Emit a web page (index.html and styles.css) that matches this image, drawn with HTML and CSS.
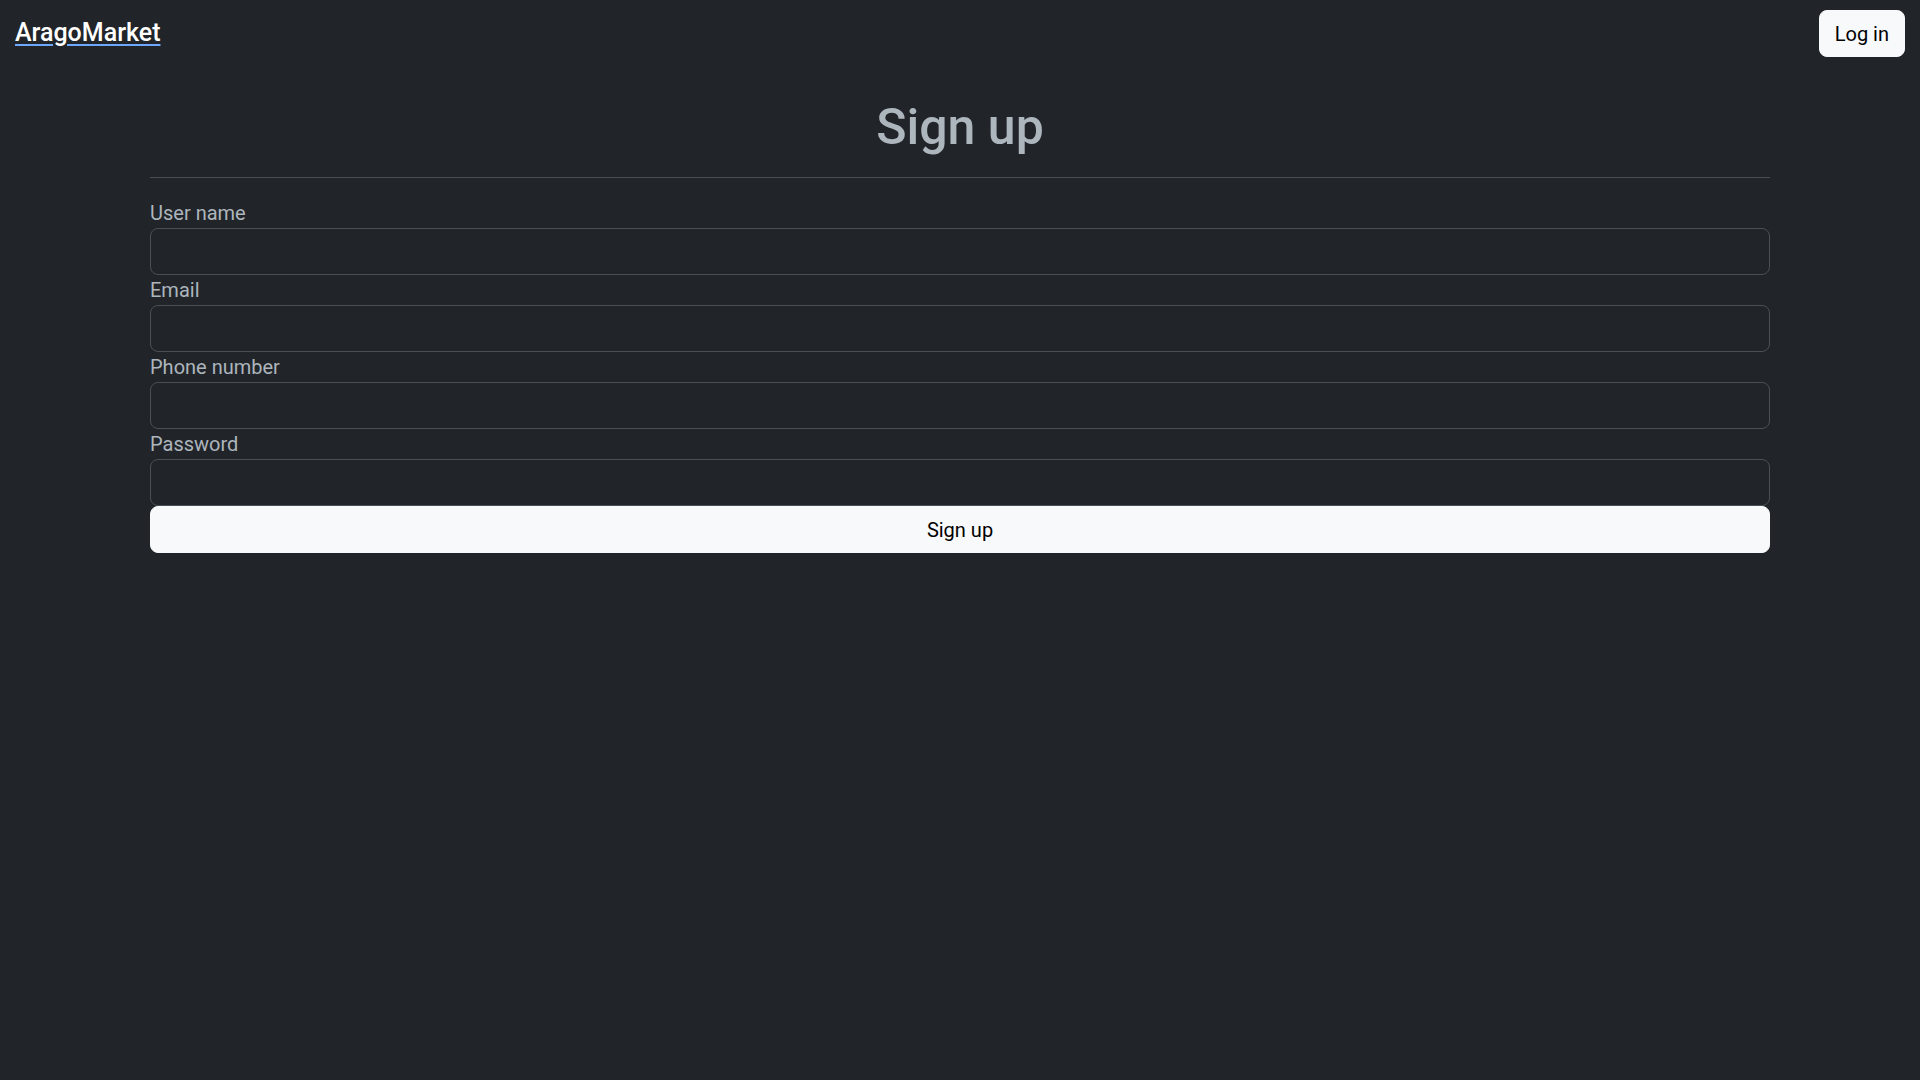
FILE: index.html
```html
<!DOCTYPE html>
<html lang="en">
<head>
<meta charset="utf-8">
<title>Sign up - AragoMarket</title>
<link rel="stylesheet" href="styles.css">
</head>
<body>
<header class="topbar">
  <a class="brand" href="#">AragoMarket</a>
  <button class="btn btn-login" type="button">Log in</button>
</header>
<main class="container">
  <h1 class="title">Sign up</h1>
  <hr class="divider">
  <form class="form">
    <label class="label" for="username">User name</label>
    <input class="input" id="username" type="text">
    <label class="label" for="email">Email</label>
    <input class="input" id="email" type="email">
    <label class="label" for="phone">Phone number</label>
    <input class="input" id="phone" type="tel">
    <label class="label" for="password">Password</label>
    <input class="input" id="password" type="password">
    <button class="btn btn-submit" type="submit">Sign up</button>
  </form>
</main>
</body>
</html>
```
FILE: styles.css
```css
* { box-sizing: border-box; }
html, body { margin: 0; padding: 0; }
body {
  background: #212529;
  color: #adb5bd;
  font-family: Roboto, "Liberation Sans", sans-serif;
  min-height: 100vh;
}
.topbar {
  display: flex;
  justify-content: space-between;
  align-items: flex-start;
  padding: 10px 15px 0 15px;
}
.brand {
  color: #ffffff;
  font-size: 25px;
  font-weight: 500;
  line-height: 44px;
  margin-top: 1px;
  text-decoration: underline;
  text-decoration-color: #6ea8fe;
  text-underline-offset: 3px;
}
.btn {
  font-family: Roboto, "Liberation Sans", sans-serif;
  border: 1px solid #f8f9fa;
  background: #f8f9fa;
  color: #000;
  border-radius: 8px;
  font-size: 20px;
  line-height: 30px;
  cursor: pointer;
}
.btn-login {
  height: 47px;
  padding: 0 15px;
}
.container {
  width: 1620px;
  margin: 0 auto;
  padding-top: 41px;
}
.title {
  margin: 0;
  text-align: center;
  font-size: 50px;
  font-weight: 500;
  line-height: 58px;
  color: #adb5bd;
}
.divider {
  margin: 21px 0 20px 0;
  border: 0;
  border-top: 1px solid #4a4e52;
}
.form {
  display: flex;
  flex-direction: column;
}
.label {
  font-size: 20px;
  line-height: 30px;
  color: #adb5bd;
}
.input {
  height: 47px;
  background: #212529;
  border: 1px solid #495057;
  border-radius: 8px;
  color: #dee2e6;
  font-size: 20px;
  padding: 0 16px;
}
.btn-submit {
  height: 47px;
  width: 100%;
}
```
